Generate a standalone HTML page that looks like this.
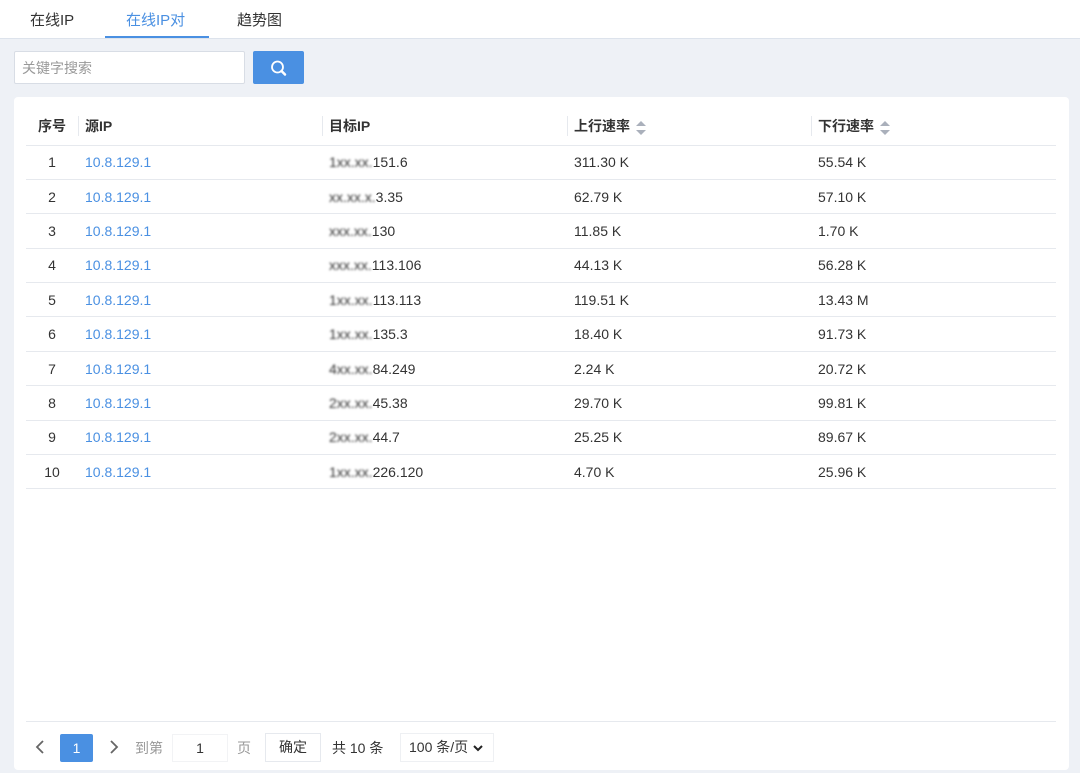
<!DOCTYPE html>
<html><head><meta charset="utf-8"><style>
*{margin:0;padding:0;box-sizing:border-box}
body{width:1080px;height:773px;background:#eef1f6;font-family:"Liberation Sans","Noto Sans CJK SC",sans-serif;font-size:14px;color:#333;position:relative;overflow:hidden}
.tabs{position:absolute;left:0;top:0;width:1080px;height:39px;background:#fff;border-bottom:1px solid #dde3ec}
.tab{position:absolute;top:9px;font-size:15px;color:#333}
.tab.a{color:#4a90e2}
.ul{position:absolute;left:105px;top:36px;width:104px;height:2px;background:#4a90e2}
.inp{position:absolute;left:14px;top:51px;width:231px;height:33px;background:#fff;border:1px solid #d8dde5;border-radius:2px;color:#999;font-size:14px;padding:6px 7px}
.btn{position:absolute;left:253px;top:51px;width:51px;height:33px;background:#4a90e2;border-radius:2px}
.card{position:absolute;left:14px;top:97px;width:1055px;height:673px;background:#fff;border-radius:4px}
table{position:absolute;left:12px;top:11px;width:1030px;border-collapse:collapse}
th{height:37px;text-align:left;font-weight:bold;color:#333;font-size:14px;border-bottom:1px solid #e6e9ee;padding-left:7px;position:relative}
th+th:before{content:"";position:absolute;left:0;top:8px;height:20px;border-left:1px solid #e6e9ee}
td{height:34.4px;border-bottom:1px solid #e6e9ee;padding-left:7px;font-size:14px;color:#333}
td:first-child{text-align:center;padding-left:0}
td.l{color:#4a90e2}
.b{filter:blur(1px);color:#333}
.s{display:inline-block;vertical-align:middle;margin-left:6px;width:10px;height:14px;position:relative}
.s:before,.s:after{content:"";position:absolute;left:0;border-left:5px solid transparent;border-right:5px solid transparent}
.s:before{top:0;border-bottom:5px solid #aab0bb}
.s:after{bottom:0;border-top:5px solid #aab0bb}
.foot{position:absolute;left:12px;top:624px;width:1030px;border-top:1px solid #e6e9ee}
.pg{position:absolute;top:637px;line-height:28px;font-size:14px}
</style></head><body>
<div class="tabs">
<span class="tab" style="left:30px">在线IP</span>
<span class="tab a" style="left:126px">在线IP对</span>
<span class="tab" style="left:237px">趋势图</span>
<div class="ul"></div>
</div>
<div class="inp">关键字搜索</div>
<div class="btn"><svg width="51" height="33" viewBox="0 0 51 33"><circle cx="24.5" cy="16" r="5.5" fill="none" stroke="#fff" stroke-width="1.8"/><path d="M28.5 20l3.5 3.5" stroke="#fff" stroke-width="2.5" stroke-linecap="round"/></svg></div>
<div class="card">
<table>
<tr><th style="width:52px;text-align:center;padding-left:0">序号</th><th style="width:244px">源IP</th><th style="width:245px">目标IP</th><th style="width:244px">上行速率<span class="s"></span></th><th>下行速率<span class="s"></span></th></tr>
<tr><td>1</td><td class="l">10.8.129.1</td><td><span class="b">1xx.xx.</span>151.6</td><td>311.30 K</td><td>55.54 K</td></tr>
<tr><td>2</td><td class="l">10.8.129.1</td><td><span class="b">xx.xx.x.</span>3.35</td><td>62.79 K</td><td>57.10 K</td></tr>
<tr><td>3</td><td class="l">10.8.129.1</td><td><span class="b">xxx.xx.</span>130</td><td>11.85 K</td><td>1.70 K</td></tr>
<tr><td>4</td><td class="l">10.8.129.1</td><td><span class="b">xxx.xx.</span>113.106</td><td>44.13 K</td><td>56.28 K</td></tr>
<tr><td>5</td><td class="l">10.8.129.1</td><td><span class="b">1xx.xx.</span>113.113</td><td>119.51 K</td><td>13.43 M</td></tr>
<tr><td>6</td><td class="l">10.8.129.1</td><td><span class="b">1xx.xx.</span>135.3</td><td>18.40 K</td><td>91.73 K</td></tr>
<tr><td>7</td><td class="l">10.8.129.1</td><td><span class="b">4xx.xx.</span>84.249</td><td>2.24 K</td><td>20.72 K</td></tr>
<tr><td>8</td><td class="l">10.8.129.1</td><td><span class="b">2xx.xx.</span>45.38</td><td>29.70 K</td><td>99.81 K</td></tr>
<tr><td>9</td><td class="l">10.8.129.1</td><td><span class="b">2xx.xx.</span>44.7</td><td>25.25 K</td><td>89.67 K</td></tr>
<tr><td>10</td><td class="l">10.8.129.1</td><td><span class="b">1xx.xx.</span>226.120</td><td>4.70 K</td><td>25.96 K</td></tr>
</table>
<div class="foot"></div>
<svg style="position:absolute;left:20px;top:642px" width="12" height="16"><path d="M9 2L3 8l6 6" fill="none" stroke="#666" stroke-width="1.8"/></svg>
<div style="position:absolute;left:46px;top:637px;width:33px;height:28px;background:#4a90e2;border-radius:2px;color:#fff;text-align:center;line-height:28px">1</div>
<svg style="position:absolute;left:94px;top:642px" width="12" height="16"><path d="M3 2l6 6-6 6" fill="none" stroke="#666" stroke-width="1.8"/></svg>
<span class="pg" style="left:121px;color:#999">到第</span>
<div style="position:absolute;left:158px;top:637px;width:56px;height:28px;border:1px solid #f2f3f5;text-align:center;line-height:26px">1</div>
<span class="pg" style="left:223px;color:#999">页</span>
<div style="position:absolute;left:251px;top:636px;width:56px;height:29px;border:1px solid #e6e9ee;text-align:center;line-height:27px">确定</div>
<span class="pg" style="left:318px">共 10 条</span>
<div style="position:absolute;left:386px;top:636px;width:94px;height:29px;border:1px solid #eef0f3;line-height:27px;padding-left:8px">100 条/页 <svg width="12" height="10" style="vertical-align:middle"><path d="M2 3l4 4 4-4" fill="none" stroke="#222" stroke-width="2"/></svg></div>
</div>
</body></html>
